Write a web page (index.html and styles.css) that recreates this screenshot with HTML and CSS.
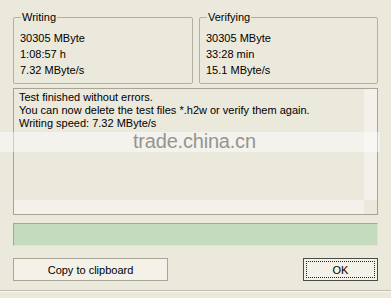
FILE: index.html
```html
<!DOCTYPE html>
<html>
<head>
<meta charset="utf-8">
<link rel="stylesheet" href="styles.css">
</head>
<body>
<div class="dialog">
  <div class="groups">
    <fieldset class="group group-write">
      <legend>Writing</legend>
      <div class="line">30305 MByte</div>
      <div class="line">1:08:57 h</div>
      <div class="line">7.32 MByte/s</div>
    </fieldset>
    <fieldset class="group group-verify">
      <legend>Verifying</legend>
      <div class="line">30305 MByte</div>
      <div class="line">33:28 min</div>
      <div class="line">15.1 MByte/s</div>
    </fieldset>
  </div>
  <div class="memo">
    <div class="memo-text">
      <div>Test finished without errors.</div>
      <div>You can now delete the test files *.h2w or verify them again.</div>
      <div>Writing speed: 7.32 MByte/s</div>
    </div>
    <div class="scroll-v"></div>
    <div class="scroll-h"></div>
    <div class="scroll-corner"></div>
  </div>
  <div class="progress"></div>
  <div class="buttons">
    <button class="btn btn-copy">Copy to clipboard</button>
    <button class="btn btn-ok"><span class="focus">OK</span></button>
  </div>
  <div class="footer"></div>
  <div class="watermark"><span class="wm-text">trade.china.cn</span></div>
</div>
</body>
</html>
```

FILE: styles.css
```css
html, body {
  margin: 0;
  padding: 0;
  background: #ebe8dc;
}
.dialog {
  position: relative;
  width: 391px;
  height: 298px;
  box-sizing: border-box;
  padding: 11px 13px 0 13px;
  font-family: "Liberation Sans", Arial, sans-serif;
  font-size: 11px;
  color: #000;
  display: flex;
  flex-direction: column;
  overflow: hidden;
}
.groups {
  display: flex;
  gap: 6px;
  height: 73px;
}
.group {
  margin: 0;
  box-sizing: border-box;
  height: 73px;
  border: 1px solid #b3b0a2;
  border-radius: 2px;
  padding: 6px 4px 0 6px;
  min-width: 0;
}
.group-write { width: 180px; }
.group-verify { width: 179px; }
.group legend {
  padding: 0 1px;
  margin-left: 1px;
  line-height: 13px;
}
.line {
  line-height: 16px;
  white-space: nowrap;
}
.memo {
  margin-top: 4px;
  height: 127px;
  box-sizing: border-box;
  border: 1px solid #a7a496;
  display: grid;
  grid-template-columns: 1fr 13px;
  grid-template-rows: 1fr 14px;
  background: #ebe8dc;
}
.memo-text {
  padding: 2px 0 0 5px;
  line-height: 13px;
  white-space: nowrap;
  overflow: hidden;
}
.scroll-v { background: #f3f1ea; }
.scroll-h { background: #f3f1ea; }
.scroll-corner { background: #ebe8dc; }
.progress {
  margin-top: 8px;
  height: 23px;
  box-sizing: border-box;
  border-top: 1px solid #a5a899;
  border-left: 1px solid #a5a899;
  border-bottom: 1px solid #e0e3d6;
  border-right: 1px solid #e0e3d6;
  background: #c4dbbd;
}
.buttons {
  margin-top: 12px;
  display: flex;
  justify-content: space-between;
}
.btn {
  height: 23px;
  box-sizing: border-box;
  font-family: "Liberation Sans", Arial, sans-serif;
  font-size: 11px;
  color: #000;
  background: #f3f1e8;
  border: 1px solid #a9a697;
  padding: 0;
  display: flex;
  align-items: center;
  justify-content: center;
}
.btn-copy { width: 155px; }
.btn-ok {
  width: 75px;
  border: 1px solid #4a4a46;
  padding: 2px;
}
.btn-ok .focus {
  width: 100%;
  height: 100%;
  box-sizing: border-box;
  border: 1px dotted #222;
  display: flex;
  align-items: center;
  justify-content: center;
}
.footer {
  margin-top: 9px;
  margin-left: -13px;
  margin-right: -13px;
  border-top: 1px solid #c3c0b3;
  box-shadow: inset 0 1px 0 #f7f6f1;
  flex: 1;
}
.watermark {
  position: absolute;
  left: 0;
  top: 132px;
  width: 380px;
  height: 20px;
  background: rgba(255, 255, 255, 0.45);
}
.wm-text {
  position: absolute;
  left: 133px;
  top: -2px;
  font-family: "Liberation Sans", Arial, sans-serif;
  font-size: 20px;
  line-height: 23px;
  color: #959592;
  letter-spacing: -0.2px;
}
```
